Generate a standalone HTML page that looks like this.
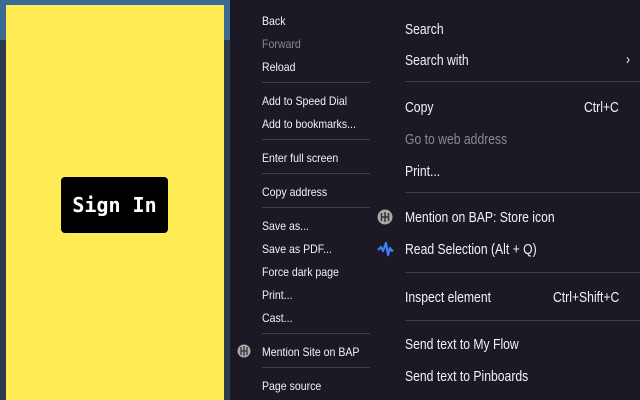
<!DOCTYPE html>
<html><head><meta charset="utf-8"><style>
*{margin:0;padding:0;box-sizing:border-box}
body{width:640px;height:400px;overflow:hidden;position:relative;background:#2e3b48;font-family:"Liberation Sans",sans-serif}
.top{position:absolute;left:0;top:0;width:230px;height:40px;background:#3b6a95}
.yel{position:absolute;left:6px;top:5px;width:218px;height:395px;background:#ffec55}
.btn{position:absolute;left:61px;top:177px;width:107px;height:56px;background:#000;border-radius:4px;color:#fff;font:bold 20px "DejaVu Sans Mono",monospace;text-align:center;line-height:56px}
.m{position:absolute;top:0;height:400px;background:#1c1925}
.t{position:absolute;color:#f2f2f2;white-space:nowrap;transform-origin:left center;line-height:1}
.a{font-size:12px;transform:scaleX(.88)}
.b{font-size:14.5px;transform:scaleX(.84)}
.g{color:#8a8890}
.s{position:absolute;height:1px;background:#3f3d47}
</style></head><body>
<div class="top"></div>
<div class="yel"></div>
<div class="btn">Sign In</div>
<div class="m" style="left:230px;width:410px"></div>

<div class="t a" style="left:262px;top:15px">Back</div>
<div class="t a g" style="left:262px;top:38px">Forward</div>
<div class="t a" style="left:262px;top:61px">Reload</div>
<div class="s" style="left:262px;top:82px;width:108px"></div>
<div class="t a" style="left:262px;top:95px">Add to Speed Dial</div>
<div class="t a" style="left:262px;top:118px">Add to bookmarks...</div>
<div class="s" style="left:262px;top:139px;width:108px"></div>
<div class="t a" style="left:262px;top:152px">Enter full screen</div>
<div class="s" style="left:262px;top:173px;width:108px"></div>
<div class="t a" style="left:262px;top:186px">Copy address</div>
<div class="s" style="left:262px;top:207px;width:108px"></div>
<div class="t a" style="left:262px;top:220px">Save as...</div>
<div class="t a" style="left:262px;top:243px">Save as PDF...</div>
<div class="t a" style="left:262px;top:266px">Force dark page</div>
<div class="t a" style="left:262px;top:289px">Print...</div>
<div class="t a" style="left:262px;top:312px">Cast...</div>
<div class="s" style="left:262px;top:333px;width:108px"></div>
<svg style="position:absolute;left:237px;top:344px" width="14" height="14" viewBox="0 0 14 14"><circle cx="7" cy="7" r="6.5" fill="#aaa"/><path d="M4 3v8M10 3v8M4 7h6M7 2v10" stroke="#333" stroke-width="1.3" fill="none"/></svg>
<div class="t a" style="left:262px;top:346px">Mention Site on BAP</div>
<div class="s" style="left:262px;top:367px;width:108px"></div>
<div class="t a" style="left:262px;top:380px">Page source</div>

<div class="t b" style="left:405px;top:23px">Search</div>
<div class="t b" style="left:405px;top:54px">Search with</div>
<div class="t b" style="left:626px;top:53px">›</div>
<div class="s" style="left:405px;top:81px;width:235px"></div>
<div class="t b" style="left:405px;top:101px">Copy</div>
<div class="t b" style="left:584px;top:101px">Ctrl+C</div>
<div class="t b g" style="left:405px;top:133px">Go to web address</div>
<div class="t b" style="left:405px;top:165px">Print...</div>
<div class="s" style="left:405px;top:192px;width:235px"></div>
<svg style="position:absolute;left:377px;top:209px" width="16" height="16" viewBox="0 0 16 16"><circle cx="8" cy="8" r="7.5" fill="#aaa"/><path d="M4.5 4v8M11.5 4v8M4.5 8h7M8 3v10" stroke="#333" stroke-width="1.5" fill="none"/></svg>
<div class="t b" style="left:405px;top:211px">Mention on BAP: Store icon</div>
<svg style="position:absolute;left:377px;top:241px" width="17" height="16" viewBox="0 0 17 16"><path d="M1 9l3-3 2 4 3-8 2 12 2-7 2 3 1-1" stroke="#3b82f6" stroke-width="2.2" fill="none" stroke-linejoin="round"/></svg>
<div class="t b" style="left:405px;top:243px">Read Selection (Alt + Q)</div>
<div class="s" style="left:405px;top:272px;width:235px"></div>
<div class="t b" style="left:405px;top:291px">Inspect element</div>
<div class="t b" style="left:553px;top:291px">Ctrl+Shift+C</div>
<div class="s" style="left:405px;top:320px;width:235px"></div>
<div class="t b" style="left:405px;top:338px">Send text to My Flow</div>
<div class="t b" style="left:405px;top:370px">Send text to Pinboards</div>
</body></html>
